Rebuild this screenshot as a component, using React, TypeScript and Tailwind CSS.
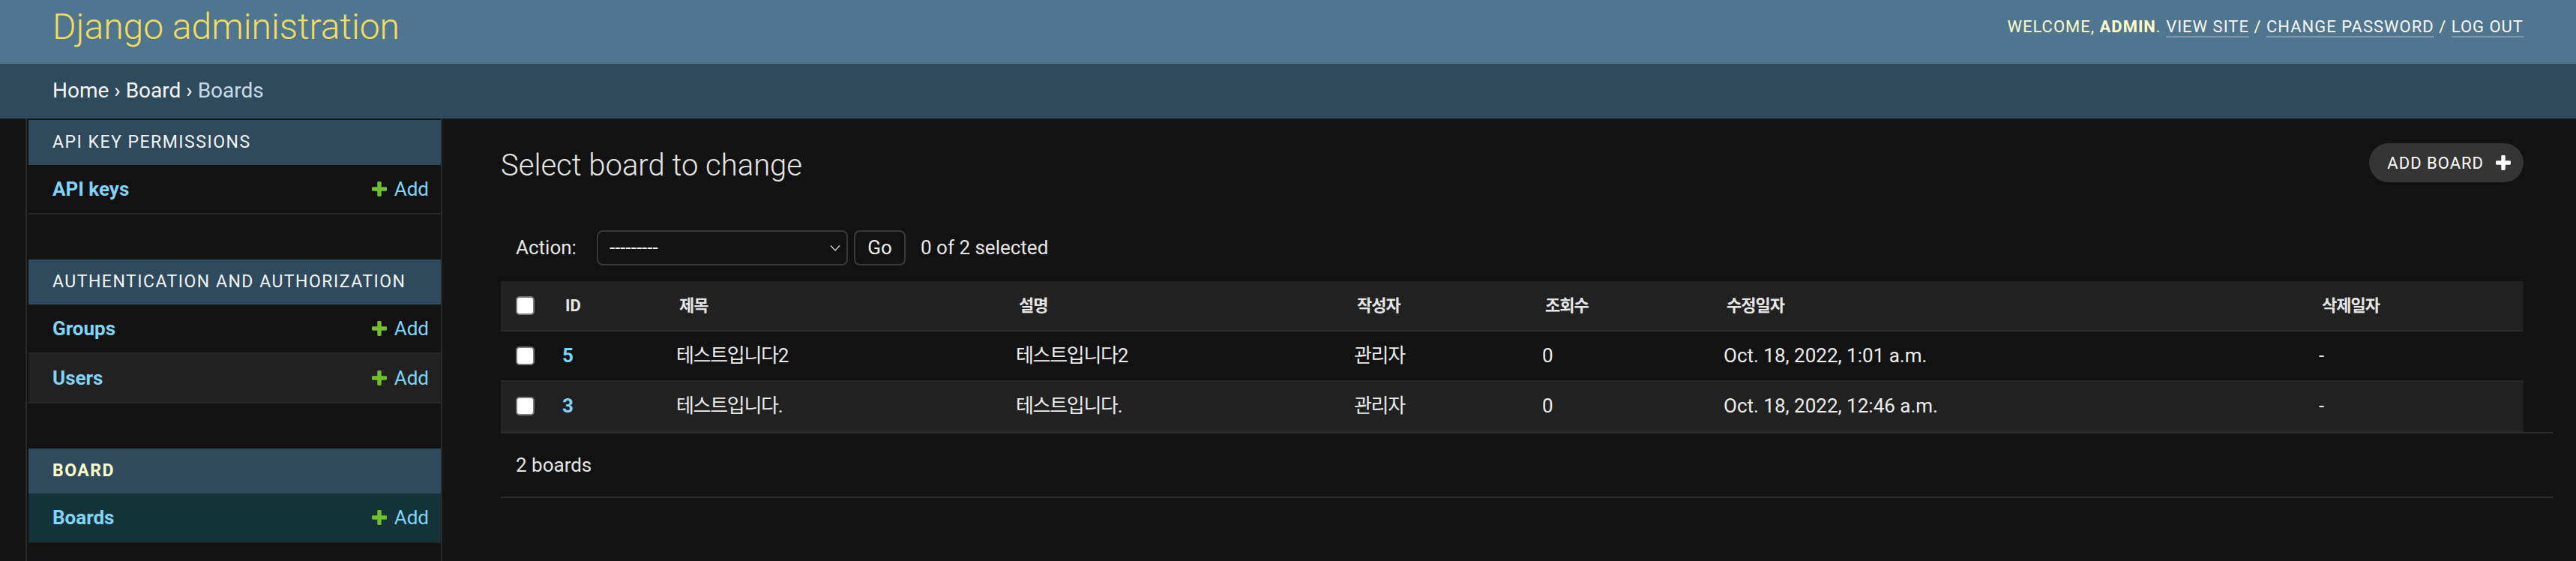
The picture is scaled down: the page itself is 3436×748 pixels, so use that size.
import React from "react";

const PLUS_PATH =
  "M1600 796v192q0 40-28 68t-68 28h-416v416q0 40-28 68t-68 28h-192q-40 0-68-28t-28-68v-416h-416q-40 0-68-28t-28-68v-192q0-40 28-68t68-28h416v-416q0-40 28-68t68-28h192q40 0 68 28t28 68v416h416q40 0 68 28t28 68z";

function Plus({ color, size = 20 }: { color: string; size?: number }) {
  return (
    <svg width={size} height={size} viewBox="192 192 1408 1408" className="shrink-0">
      <path d={PLUS_PATH} fill={color} />
    </svg>
  );
}

function Checkbox() {
  return <div className="w-[25px] h-[25px] bg-white border-2 border-[#7a7a7a] rounded-[5px]" />;
}

type Model = { name: string };

function Module({
  title,
  models,
  current,
}: {
  title: string;
  models: Model[];
  current?: boolean;
}) {
  return (
    <div className="mb-[60px]">
      <div
        className={
          current
            ? "h-[60px] bg-[#2f4a5d] flex items-center pl-[32px] text-[23px] tracking-[1.5px] uppercase text-[#ffffcc] font-bold"
            : "h-[60px] bg-[#2f4a5d] flex items-center pl-[32px] text-[23px] tracking-[1.5px] uppercase text-[#f5f5f5]"
        }
      >
        {title}
      </div>
      {models.map((m, i) => (
        <div
          key={m.name}
          className={
            current
              ? "h-[66px] border-b-2 border-[#272727] bg-[#143339] flex items-center justify-between pl-[32px] pr-[16px] text-[26px]"
              : i % 2 === 1
              ? "h-[66px] border-b-2 border-[#272727] bg-[#212121] flex items-center justify-between pl-[32px] pr-[16px] text-[26px]"
              : "h-[66px] border-b-2 border-[#272727] flex items-center justify-between pl-[32px] pr-[16px] text-[26px]"
          }
        >
          <span className="font-bold text-[#81d4fa]">{m.name}</span>
          <span className="flex items-center gap-[10px] text-[#81d4fa]">
            <Plus color="#70bf2b" />
            <span>Add</span>
          </span>
        </div>
      ))}
    </div>
  );
}

const rows = [
  { id: "5", title: "테스트입니다2", desc: "테스트입니다2", author: "관리자", views: "0", modified: "Oct. 18, 2022, 1:01 a.m.", deleted: "-" },
  { id: "3", title: "테스트입니다.", desc: "테스트입니다.", author: "관리자", views: "0", modified: "Oct. 18, 2022, 12:46 a.m.", deleted: "-" },
];

const cols = "grid grid-cols-[66px_152px_453px_451px_251px_242px_794px_1fr]";

export default function App() {
  return (
    <div className="min-h-screen bg-[#121212] text-[#eeeeee] font-['Roboto','Noto_Sans_CJK_KR',sans-serif] flex flex-col">
      {/* Header */}
      <div className="h-[85px] shrink-0 bg-[#50768f] flex justify-between items-start px-[70px]">
        <div className="pt-[12px] text-[48px] leading-[48px] font-light text-[#f5dd5d]">
          Django administration
        </div>
        <div className="pt-[25px] text-[22px] leading-[22px] tracking-[1px] uppercase text-[#ffffcc]">
          WELCOME, <strong className="font-bold">ADMIN</strong>.{" "}
          <span className="text-[#f7f7f7] border-b-2 border-[rgba(255,255,255,0.25)]">VIEW SITE</span> /{" "}
          <span className="text-[#f7f7f7] border-b-2 border-[rgba(255,255,255,0.25)]">CHANGE PASSWORD</span> /{" "}
          <span className="text-[#f7f7f7] border-b-2 border-[rgba(255,255,255,0.25)]">LOG OUT</span>
        </div>
      </div>

      {/* Breadcrumbs */}
      <div className="h-[73px] shrink-0 bg-[#2f4a5d] px-[70px] pt-[22px] text-[28px] leading-[28px] text-[#f7f7f7]">
        <span>Home</span> › <span>Board</span> › <span className="text-[#c9dbe6]">Boards</span>
      </div>

      {/* Main */}
      <div className="flex flex-1">
        <div className="w-[36px] shrink-0 border-r-2 border-[#2b2b2b]" />
        <div className="w-[554px] shrink-0 border-r-2 border-[#2b2b2b] pt-[2px] pl-[2px]">
          <Module title="API Key Permissions" models={[{ name: "API keys" }]} />
          <Module
            title="Authentication and Authorization"
            models={[{ name: "Groups" }, { name: "Users" }]}
          />
          <Module title="Board" models={[{ name: "Boards" }]} current />
        </div>

        <div className="flex-1 min-w-0 pl-[78px] pr-[30px] pt-[33px]">
          <div className="flex justify-between items-start mr-[40px]">
            <h1 className="mt-[10px] text-[40px] leading-[40px] font-light text-[#e6e6e6]">
              Select board to change
            </h1>
            <div className="h-[52px] rounded-full bg-[#353535] pl-[24px] pr-[17px] flex items-center gap-[16px] text-[22px] tracking-[1px] uppercase text-white">
              <span>Add board</span>
              <Plus color="#ffffff" />
            </div>
          </div>

          {/* Actions */}
          <div className="mt-[64px] h-[47px] flex items-center pl-[20px] text-[26px] text-[#e6e6e6]">
            <span className="w-[108px]">Action:</span>
            <div className="w-[335px] h-[47px] border-2 border-[#3a3a3a] rounded-[8px] flex items-center justify-between pl-[15px] pr-[8px] text-[#eeeeee]">
              <span>---------</span>
              <svg width="14" height="10" viewBox="0 0 14 10">
                <polyline points="1,1.5 7,8 13,1.5" fill="none" stroke="#d0d0d0" strokeWidth="1.4" />
              </svg>
            </div>
            <div className="ml-[8px] w-[69px] h-[47px] border-2 border-[#3a3a3a] rounded-[8px] flex items-center justify-center text-[#eeeeee]">
              Go
            </div>
            <span className="ml-[20px]">0 of 2 selected</span>
          </div>

          {/* Results */}
          <div className="mt-[21px] border-b-2 border-[#2b2b2b]">
            <div className="mr-[40px]">
              <div className={`${cols} h-[67px] bg-[#212121] border-b-2 border-[#2b2b2b] items-center text-[22px] font-bold text-[#e6e6e6]`}>
                <div className="pl-[20px]"><Checkbox /></div>
                <div className="pl-[20px]">ID</div>
                <div className="pl-[20px] tracking-[-1px]">제목</div>
                <div className="pl-[20px] tracking-[-1px]">설명</div>
                <div className="pl-[20px] tracking-[-1px]">작성자</div>
                <div className="pl-[20px] tracking-[-1px]">조회수</div>
                <div className="pl-[20px] tracking-[-1px]">수정일자</div>
                <div className="pl-[20px] tracking-[-1px]">삭제일자</div>
              </div>
              {rows.map((r, i) => (
                <div
                  key={r.id}
                  className={
                    i % 2 === 1
                      ? `${cols} h-[67px] bg-[#212121] border-b-2 border-[#262626] items-center text-[26px]`
                      : `${cols} h-[67px] border-b-2 border-[#262626] items-center text-[26px]`
                  }
                >
                  <div className="pl-[20px]"><Checkbox /></div>
                  <div className="pl-[16px] font-bold text-[#81d4fa]">{r.id}</div>
                  <div className="pl-[16px] tracking-[-1.3px]">{r.title}</div>
                  <div className="pl-[16px] tracking-[-1.3px]">{r.desc}</div>
                  <div className="pl-[16px] tracking-[-1.3px]">{r.author}</div>
                  <div className="pl-[16px]">{r.views}</div>
                  <div className="pl-[16px]">{r.modified}</div>
                  <div className="pl-[16px]">{r.deleted}</div>
                </div>
              ))}
            </div>
          </div>
          <div className="h-[86px] border-b-2 border-[#2b2b2b] flex items-center pl-[20px] text-[26px] text-[#e6e6e6]">
            2 boards
          </div>
        </div>
      </div>
    </div>
  );
}
